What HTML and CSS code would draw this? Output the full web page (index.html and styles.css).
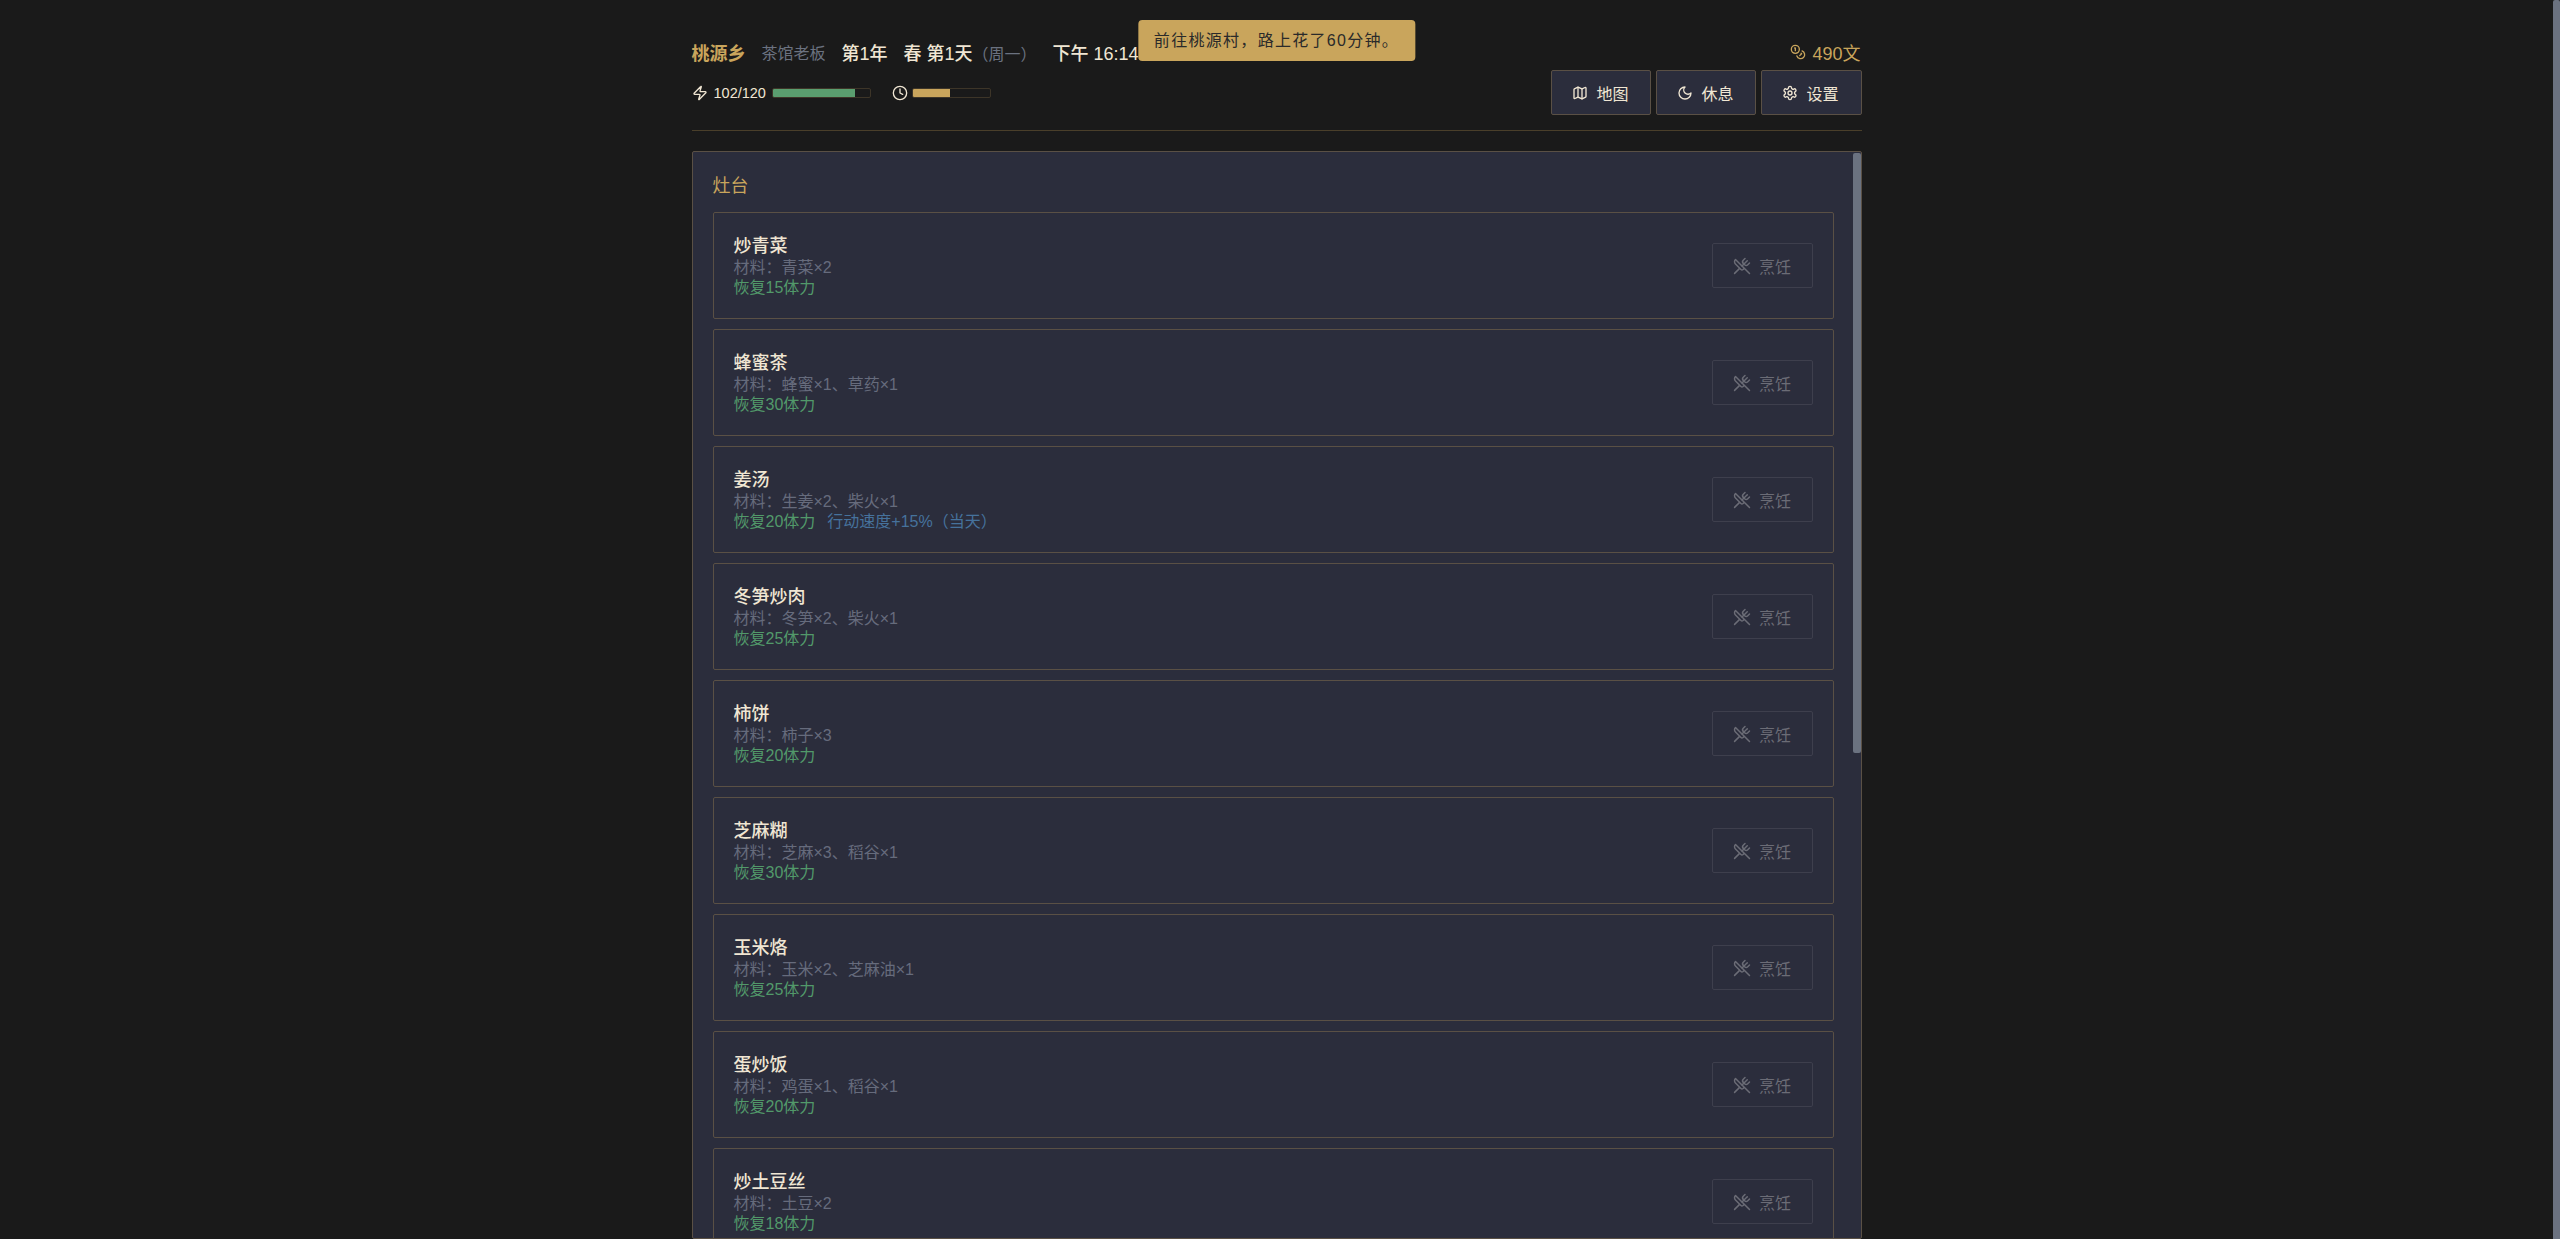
FILE: index.html
```html
<!DOCTYPE html>
<html lang="zh-CN">
<head>
  <meta charset="UTF-8">
  <title>桃源乡</title>
  <link rel="stylesheet" href="styles.css">
</head>
<body>

  <svg class="icon-defs" width="0" height="0">
    <symbol id="i-zap" viewBox="0 0 24 24"><path d="M4 14a1 1 0 0 1-.78-1.63l9.9-10.2a.5.5 0 0 1 .86.46l-1.92 6.02A1 1 0 0 0 13 10h7a1 1 0 0 1 .78 1.63l-9.9 10.2a.5.5 0 0 1-.86-.46l1.92-6.02A1 1 0 0 0 11 14z"/></symbol>
    <symbol id="i-clock" viewBox="0 0 24 24"><circle cx="12" cy="12" r="10"/><polyline points="12 6 12 12 16 14"/></symbol>
    <symbol id="i-coins" viewBox="0 0 24 24"><circle cx="8" cy="8" r="6"/><path d="M18.09 10.37A6 6 0 1 1 10.34 18"/><path d="M7 6h1v4"/><path d="m16.71 13.88.7.71-2.82 2.82"/></symbol>
    <symbol id="i-map" viewBox="0 0 24 24"><path d="M14.106 5.553a2 2 0 0 0 1.788 0l3.659-1.83A1 1 0 0 1 21 4.619v12.764a1 1 0 0 1-.553.894l-4.553 2.277a2 2 0 0 1-1.788 0l-4.212-2.106a2 2 0 0 0-1.788 0l-3.659 1.83A1 1 0 0 1 3 19.381V6.618a1 1 0 0 1 .553-.894l4.553-2.277a2 2 0 0 1 1.788 0z"/><path d="M15 5.764v15"/><path d="M9 3.236v15"/></symbol>
    <symbol id="i-moon" viewBox="0 0 24 24"><path d="M12 3a6 6 0 0 0 9 9 9 9 0 1 1-9-9Z"/></symbol>
    <symbol id="i-gear" viewBox="0 0 24 24"><path d="M12.22 2h-.44a2 2 0 0 0-2 2v.18a2 2 0 0 1-1 1.73l-.43.25a2 2 0 0 1-2 0l-.15-.08a2 2 0 0 0-2.73.73l-.22.38a2 2 0 0 0 .73 2.73l.15.1a2 2 0 0 1 1 1.72v.51a2 2 0 0 1-1 1.74l-.15.09a2 2 0 0 0-.73 2.73l.22.38a2 2 0 0 0 2.73.73l.15-.08a2 2 0 0 1 2 0l.43.25a2 2 0 0 1 1 1.73V20a2 2 0 0 0 2 2h.44a2 2 0 0 0 2-2v-.18a2 2 0 0 1 1-1.73l.43-.25a2 2 0 0 1 2 0l.15.08a2 2 0 0 0 2.73-.73l.22-.39a2 2 0 0 0-.73-2.73l-.15-.08a2 2 0 0 1-1-1.74v-.5a2 2 0 0 1 1-1.74l.15-.09a2 2 0 0 0 .73-2.73l-.22-.38a2 2 0 0 0-2.73-.73l-.15.08a2 2 0 0 1-2 0l-.43-.25a2 2 0 0 1-1-1.73V4a2 2 0 0 0-2-2z"/><circle cx="12" cy="12" r="3"/></symbol>
    <symbol id="i-cook" viewBox="0 0 24 24"><path d="m16 2-2.3 2.3a3 3 0 0 0 0 4.2l1.8 1.8a3 3 0 0 0 4.2 0L22 8"/><path d="M15 15 3.3 3.3a4.2 4.2 0 0 0 0 6l7.3 7.3c.7.7 2 .7 2.8 0L15 15Zm0 0 7 7"/><path d="m2.1 21.8 6.4-6.3"/><path d="m19 5-7 7"/></symbol>
  </svg>

  <div class="toast">前往桃源村&#xFF0C;路上花了60分钟。</div>
  <div class="page-scroll"></div>

  <div class="app">
    <header class="top">
      <div class="top-row">
        <div class="status">
          <span class="place">桃源乡</span>
          <span class="role">茶馆老板</span>
          <span class="date">第1年</span>
          <span class="date">春 第1天<span class="weekday">&#xFF08;周一&#xFF09;</span></span>
          <span class="date">下午 16:14</span>
        </div>
        <div class="money"><svg class="icon"><use href="#i-coins"/></svg>490文</div>
      </div>
      <div class="top-row second">
        <div class="meters">
          <div class="meter">
            <svg class="icon"><use href="#i-zap"/></svg>
            <span class="meter-num">102/120</span>
            <div class="bar bar-stamina"><div class="fill fill-green" style="width:85%"></div></div>
          </div>
          <div class="meter meter-time">
            <svg class="icon"><use href="#i-clock"/></svg>
            <div class="bar bar-time"><div class="fill fill-gold" style="width:48%"></div></div>
          </div>
        </div>
        <div class="actions">
          <button class="nav-btn"><svg class="icon"><use href="#i-map"/></svg>地图</button>
          <button class="nav-btn"><svg class="icon"><use href="#i-moon"/></svg>休息</button>
          <button class="nav-btn"><svg class="icon"><use href="#i-gear"/></svg>设置</button>
        </div>
      </div>
    </header>

    <section class="panel">
      <div class="panel-thumb"></div>
      <h2 class="panel-title">灶台</h2>
      <div class="recipes">
        <div class="recipe">
          <div class="info"><div class="name">炒青菜</div><div class="needs">材料&#xFF1A;青菜×2</div><div class="gain">恢复15体力</div></div>
          <button class="cook-btn" disabled><svg class="icon"><use href="#i-cook"/></svg>烹饪</button>
        </div>
        <div class="recipe">
          <div class="info"><div class="name">蜂蜜茶</div><div class="needs">材料&#xFF1A;蜂蜜×1、草药×1</div><div class="gain">恢复30体力</div></div>
          <button class="cook-btn" disabled><svg class="icon"><use href="#i-cook"/></svg>烹饪</button>
        </div>
        <div class="recipe">
          <div class="info"><div class="name">姜汤</div><div class="needs">材料&#xFF1A;生姜×2、柴火×1</div><div class="gain">恢复20体力<span class="buff">行动速度+15%&#xFF08;当天&#xFF09;</span></div></div>
          <button class="cook-btn" disabled><svg class="icon"><use href="#i-cook"/></svg>烹饪</button>
        </div>
        <div class="recipe">
          <div class="info"><div class="name">冬笋炒肉</div><div class="needs">材料&#xFF1A;冬笋×2、柴火×1</div><div class="gain">恢复25体力</div></div>
          <button class="cook-btn" disabled><svg class="icon"><use href="#i-cook"/></svg>烹饪</button>
        </div>
        <div class="recipe">
          <div class="info"><div class="name">柿饼</div><div class="needs">材料&#xFF1A;柿子×3</div><div class="gain">恢复20体力</div></div>
          <button class="cook-btn" disabled><svg class="icon"><use href="#i-cook"/></svg>烹饪</button>
        </div>
        <div class="recipe">
          <div class="info"><div class="name">芝麻糊</div><div class="needs">材料&#xFF1A;芝麻×3、稻谷×1</div><div class="gain">恢复30体力</div></div>
          <button class="cook-btn" disabled><svg class="icon"><use href="#i-cook"/></svg>烹饪</button>
        </div>
        <div class="recipe">
          <div class="info"><div class="name">玉米烙</div><div class="needs">材料&#xFF1A;玉米×2、芝麻油×1</div><div class="gain">恢复25体力</div></div>
          <button class="cook-btn" disabled><svg class="icon"><use href="#i-cook"/></svg>烹饪</button>
        </div>
        <div class="recipe">
          <div class="info"><div class="name">蛋炒饭</div><div class="needs">材料&#xFF1A;鸡蛋×1、稻谷×1</div><div class="gain">恢复20体力</div></div>
          <button class="cook-btn" disabled><svg class="icon"><use href="#i-cook"/></svg>烹饪</button>
        </div>
        <div class="recipe">
          <div class="info"><div class="name">炒土豆丝</div><div class="needs">材料&#xFF1A;土豆×2</div><div class="gain">恢复18体力</div></div>
          <button class="cook-btn" disabled><svg class="icon"><use href="#i-cook"/></svg>烹饪</button>
        </div>
      </div>
    </section>
  </div>

</body>
</html>
```

FILE: styles.css
```css
* {
  box-sizing: border-box;
}

html {
  overflow: hidden;
}

body {
  margin: 0 7px 0 0;
  background: #1a1a1a;
  color: #f0e6d3;
  font-family: "Liberation Sans", "Noto Sans CJK SC", sans-serif;
  font-size: 16px;
}

.icon-defs {
  display: block;
  height: 0;
}

.icon {
  width: 16px;
  height: 16px;
  fill: none;
  stroke: currentColor;
  stroke-width: 2;
  stroke-linecap: round;
  stroke-linejoin: round;
  flex-shrink: 0;
}

.page-scroll {
  position: fixed;
  top: 0;
  right: 0;
  bottom: 0;
  width: 7px;
  background: #6b7280;
  border-radius: 2px 2px 0 0;
}

.toast {
  position: fixed;
  top: 20px;
  left: calc(50% - 3.5px);
  transform: translateX(-50%);
  padding: 0 16px;
  height: 41px;
  line-height: 42px;
  letter-spacing: 1.3px;
  white-space: nowrap;
  background: #c9a55c;
  color: #2a2a2a;
  border-radius: 4px;
}

.app {
  width: 1170px;
  margin: 0 auto;
  height: 100vh;
  padding-top: 39px;
  display: flex;
  flex-direction: column;
}

.top {
  padding-bottom: 15px;
  border-bottom: 1px solid #4a3f2a;
  margin-bottom: 20px;
}

.top-row {
  display: flex;
  justify-content: space-between;
  align-items: center;
  height: 27px;
}

.top-row.second {
  height: 45px;
  margin-top: 4px;
}

.status {
  display: flex;
  align-items: center;
  gap: 16px;
  padding-bottom: 2px;
}

.place {
  color: #c9a55c;
  font-size: 18px;
  font-weight: bold;
}

.role {
  color: #6b7280;
}

.date {
  font-size: 18px;
  font-weight: 500;
}

.weekday {
  color: #6b7280;
  font-size: 16px;
  font-weight: normal;
}

.money {
  display: flex;
  align-items: center;
  gap: 6px;
  color: #c9a55c;
  font-size: 18px;
  padding: 0 1px 2px 0;
}

.meters {
  display: flex;
  align-items: center;
  gap: 21px;
}

.meter {
  display: flex;
  align-items: center;
  gap: 6px;
}

.meter-time {
  gap: 4px;
}

.meter-num {
  font-size: 14.5px;
}

.bar {
  height: 10px;
  border: 1px solid #3d3528;
  border-radius: 2px;
  overflow: hidden;
}

.bar-stamina {
  width: 99px;
}

.bar-time {
  width: 79px;
}

.fill {
  height: 100%;
}

.fill-green {
  background: #5a9e6f;
}

.fill-gold {
  background: #c9a55c;
}

.actions {
  display: flex;
  gap: 5px;
}

.nav-btn {
  display: flex;
  align-items: center;
  gap: 8px;
  height: 45px;
  padding: 0 22px 0 20px;
  background: #2b2d3c;
  color: #f0e6d3;
  border: 1px solid #5a5045;
  border-radius: 2px;
  font: inherit;
  cursor: pointer;
}

.panel {
  position: relative;
  flex: 1;
  min-height: 0;
  overflow: hidden;
  padding: 20px 27px 0 20px;
  background: #2b2d3c;
  border: 1px solid #5a5045;
  border-radius: 2px;
}

/* headless run hides real scrollbars, so the thumb is drawn */
.panel-thumb {
  position: absolute;
  top: 1px;
  right: 0;
  width: 8px;
  height: 600px;
  background: #6b7280;
  border-radius: 2px;
}

.panel-title {
  margin: 0 0 11px;
  color: #c9a55c;
  font-size: 18px;
  font-weight: normal;
  line-height: 29px;
}

.recipes {
  display: flex;
  flex-direction: column;
  gap: 10px;
}

.recipe {
  display: flex;
  justify-content: space-between;
  align-items: center;
  flex-shrink: 0;
  height: 107px;
  padding: 20px;
  border: 1px solid #5a5045;
  border-radius: 2px;
}

.info {
  padding-top: 1px;
}

.name {
  font-size: 18px;
  font-weight: 500;
  line-height: 24px;
}

.needs {
  color: #666b7c;
  line-height: 20px;
}

.gain {
  color: #52996a;
  line-height: 20px;
}

.buff {
  color: #46729c;
  margin-left: 12px;
}

.cook-btn {
  display: flex;
  align-items: center;
  justify-content: center;
  gap: 8px;
  width: 101px;
  height: 45px;
  background: transparent;
  color: #6b6c76;
  border: 1px solid #3e3f4d;
  border-radius: 2px;
  font: inherit;
}

.cook-btn .icon {
  width: 18px;
  height: 18px;
}
```
